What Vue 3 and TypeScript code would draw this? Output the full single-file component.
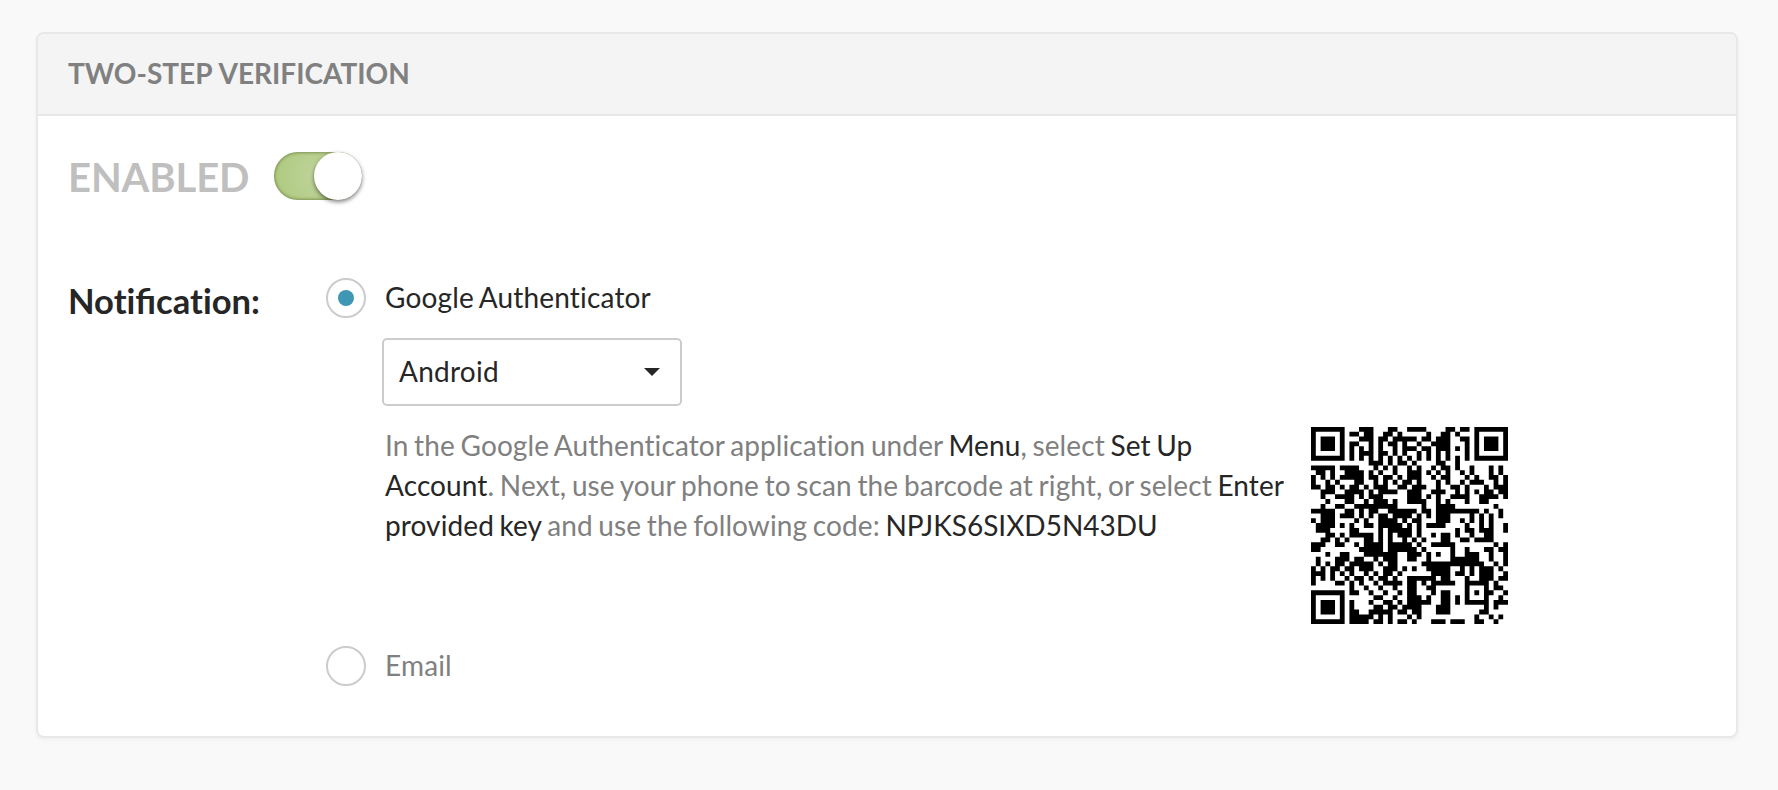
<script setup lang="ts">
import { ref } from 'vue'

const enabled = ref(true)
const method = ref<'google' | 'email'>('google')

// Dark modules of each QR row, written as column ranges.
const qrRows: string[] = [
  '0-6 10-12 16-17 20-23 28-29 31-32 34-40',
  '0 6 8-9 11-12 15-16 18 24 27-28 30 34 40',
  '0 2-4 6 10-12 14-15 17-21 23-24 26-28 31-32 34 36-38 40',
  '0 2-4 6 8-9 12 14 16-17 19 22 25-28 32 34 36-38 40',
  '0 2-4 6 8 10 12 14 17 19-21 23-24 26-28 30 32 34 36-38 40',
  '0 6 8 10-12 14-15 17 19 22 24 26 28 32 34 40',
  '0-6 8 10 12 14 16 18 20 22 24 26 28 30 32 34-40',
  '12-14 16 18-19 21 26-27 30',
  '0-4 6-9 13 15 17 20 22 25 27-28 30 33 37 39',
  '1-2 4 7-10 12 14 17 20-22 24 26 28 31 33 37 39',
  '0 2 4 6-10 12-13 15-16 18 20-22 25 27-28 32 34 37-38 40',
  '0 3 5 9-10 13 15 17 19-20 22 26 28 31 33-35 38 40',
  '0-1 3-4 6 8-9 11 13-15 18-19 21-23 26 29-30 32 36 38-40',
  '2-4 7-10 12 14-17 20-22 25-27 30 32 34 36-37 39-40',
  '2 5-8 10 12-14 20-22 24 26 29-32 35-38 40',
  '3 7-8 11 13-15 17 20-23 26 28 32 35-36',
  '2 5-6 9-17 23 26-29 38',
  '0-4 7-8 10 12-13 16-21 23-24 26-29 30-34 36 39',
  '2-4 6-8 10 12 14-15 17-20 22 24 26-28 33 35 37 39',
  '0 2-4 9 11 14-17 19 21-22 26-28 31 33 35 37',
  '1-4 6 8 11-12 14-18 20 22 24-27 32 35 37 40',
  '1-3 8-9 14 16-20 22 30 32-33 35-37 40',
  '3-4 6 8-12 14 16 18-20 22 25 27-28 30 33 36-37',
  '2-3 5 7 11-12 14 16 19 21 23 27-28 31-32 34-37',
  '0-2 5-6 9 11-14 16-19 20 22 25-29 38 40',
  '0-1 10-14 16-21 23 29 32 36-37 39-40',
  '3 6-7 11-17 20-22 24 26 29 32-34 37 40',
  '1 5-7 9-10 13 15-17 20-21 24 29-34 37 40',
  '1 3 5-6 8-12 14 16-17 23-35 38 40',
  '0 2 4-5 7-8 10-12 15-17 19 21 24-28 31 33 35-37 39',
  '0-2 4 6 8 11 13 15-16 18 25-28 30-31 33 35-37 40',
  '0 2 4 7 9-10 12 14-15 17 20-25 27-28 32 35-37 39-40',
  '0 5-6 8 10 13 15-18 20-21 23 25-29 32-36 38',
  '8 11 14 17 20-21 24-25 32 36 38-39',
  '0-6 8-9 12 15 18 20-21 25 27-28 32 34 36-37 40',
  '0 6 13-14 17 20-22 24 27-28 30 32 36 39',
  '0 2-4 6 8 12 15-16 18 20-24 27-28 30 32-36 38-40',
  '0 2-4 6 8 13-14 16-17 19-22 26-28 36 38',
  '0 2-4 6 8-9 12-16 18-19 21-22 26-28 35-36',
  '0 6 8-12 14 16 20 22 34 37 39',
  '0-6 8-11 13-14 16 18-19 21 25-27 29-31 34-35 38',
]

// One path of horizontal strokes, a subpath for every run of modules.
const qrPath = qrRows
  .flatMap((row, y) =>
    row.split(' ').map((run) => {
      const [start, end = start] = run.split('-').map(Number)
      return `M${start} ${y}h${end - start + 1}v1h${start - end - 1}z`
    }),
  )
  .join('')
</script>

<template>
  <main class="page">
    <section class="card">
      <header class="card-head">Two-Step Verification</header>
      <div class="card-body">
        <div class="status">
          <span class="status-label">{{ enabled ? 'ENABLED' : 'DISABLED' }}</span>
          <button class="toggle" :class="{ on: enabled }" aria-label="Two-step verification" @click="enabled = !enabled">
            <span class="knob"></span>
          </button>
        </div>
        <div class="settings">
          <h2 class="label">Not<span class="joined">ifi</span>cation:</h2>
          <div class="options">
            <div class="option" :class="{ active: method === 'google' }" @click="method = 'google'">
              <span class="radio"></span>
              <span>Google Authenticator</span>
            </div>
            <div class="select">
              <span>Android</span>
              <svg class="caret" viewBox="0 0 16 8"><path d="M0 0h16L8 8z" /></svg>
            </div>
            <div class="setup">
              <p class="help">
                In the Google Authenticator application under <b>Menu</b>, select <b>Set Up<br />Account</b>. Next, use your phone to scan the barcode at right, or select <b>Enter<br />provided key</b> and use the following code: <b class="code">NPJKS6SIXD5N43DU</b>
              </p>
              <svg class="qr" viewBox="0 0 41 41"><path :d="qrPath" /></svg>
            </div>
            <div class="option" :class="{ active: method === 'email' }" @click="method = 'email'">
              <span class="radio"></span>
              <span>Email</span>
            </div>
          </div>
        </div>
      </div>
    </section>
  </main>
</template>

<style>
body {
  background: #f9f9f9;
}
</style>

<style scoped>
* {
  box-sizing: border-box;
}
.page {
  height: 790px;
  padding: 32px 40px 0 36px;
  background: #f9f9f9;
  font: 28px/40px Lato, sans-serif;
  font-variant-ligatures: no-common-ligatures;
  word-spacing: -1.6px;
  color: #262626;
}
.card {
  height: 706px;
  border: 2px solid #e8e8e8;
  border-radius: 8px;
  background: #fff;
  box-shadow: 0 2px 4px rgba(0, 0, 0, 0.04);
  overflow: hidden;
}
.card-head {
  height: 82px;
  padding: 0 30px;
  border-bottom: 2px solid #e8e8e8;
  background: #f4f4f4;
  color: #808080;
  font-weight: 700;
  line-height: 78px;
  text-transform: uppercase;
  word-spacing: 1px;
}
.card-body {
  padding: 36px 30px 0;
}
.status {
  display: flex;
  height: 48px;
  gap: 24px;
}
.status-label {
  width: 182px;
  color: #bfbfbf;
  font-size: 40px;
  font-weight: 700;
  line-height: 50px;
  letter-spacing: -0.1px;
}
.toggle {
  display: flex;
  width: 88px;
  height: 48px;
  padding: 0;
  border: 0;
  border-radius: 24px;
  background: #ddd;
}
.toggle.on {
  justify-content: flex-end;
  background: radial-gradient(circle at 50% 50%, #c0d49b 0, #b0cb83 40px);
  box-shadow: inset 0 0 3px 1px rgba(90, 110, 50, 0.6);
}
.knob {
  width: 48px;
  height: 48px;
  border-radius: 50%;
  background: #fff;
  box-shadow: 0 2px 4px rgba(0, 0, 0, 0.5);
}
.settings {
  display: flex;
  padding-top: 78px;
}
.label {
  width: 258px;
  margin: 3px 0 0;
  font-size: 34px;
  font-weight: 700;
  line-height: 40px;
}
.label {
  font-size: 34.6px;
}
.joined {
  font-variant-ligatures: common-ligatures;
}
.option {
  display: flex;
  gap: 19px;
  height: 40px;
  color: #808080;
  line-height: 38px;
  letter-spacing: 0.17px;
}
.option.active {
  color: #262626;
}
.radio {
  display: grid;
  place-items: center;
  width: 40px;
  height: 40px;
  border: 2px solid #ccc;
  border-radius: 50%;
}
.active .radio::after {
  content: '';
  width: 16px;
  height: 16px;
  border-radius: 50%;
  background: #3f97b5;
}
.select {
  display: flex;
  align-items: center;
  justify-content: space-between;
  width: 300px;
  height: 68px;
  margin: 20px 0 0 56px;
  padding: 0 20px 0 15px;
  border: 2px solid #ccc;
  border-radius: 5px;
  line-height: 38px;
}
.select span {
  padding-bottom: 2px;
  letter-spacing: 0.25px;
}
.caret {
  width: 16px;
  height: 8px;
  fill: #262626;
}
.setup {
  display: flex;
  height: 240px;
  padding: 19px 0 0 59px;
}
.help {
  width: 926px;
  margin: 0;
  color: #808080;
  letter-spacing: 0.1px;
  white-space: nowrap;
}
.help b {
  color: #262626;
  font-weight: 400;
}
.help .code {
  letter-spacing: 0;
}
.qr {
  width: 197px;
  height: 197px;
  margin-top: 2px;
}
</style>
